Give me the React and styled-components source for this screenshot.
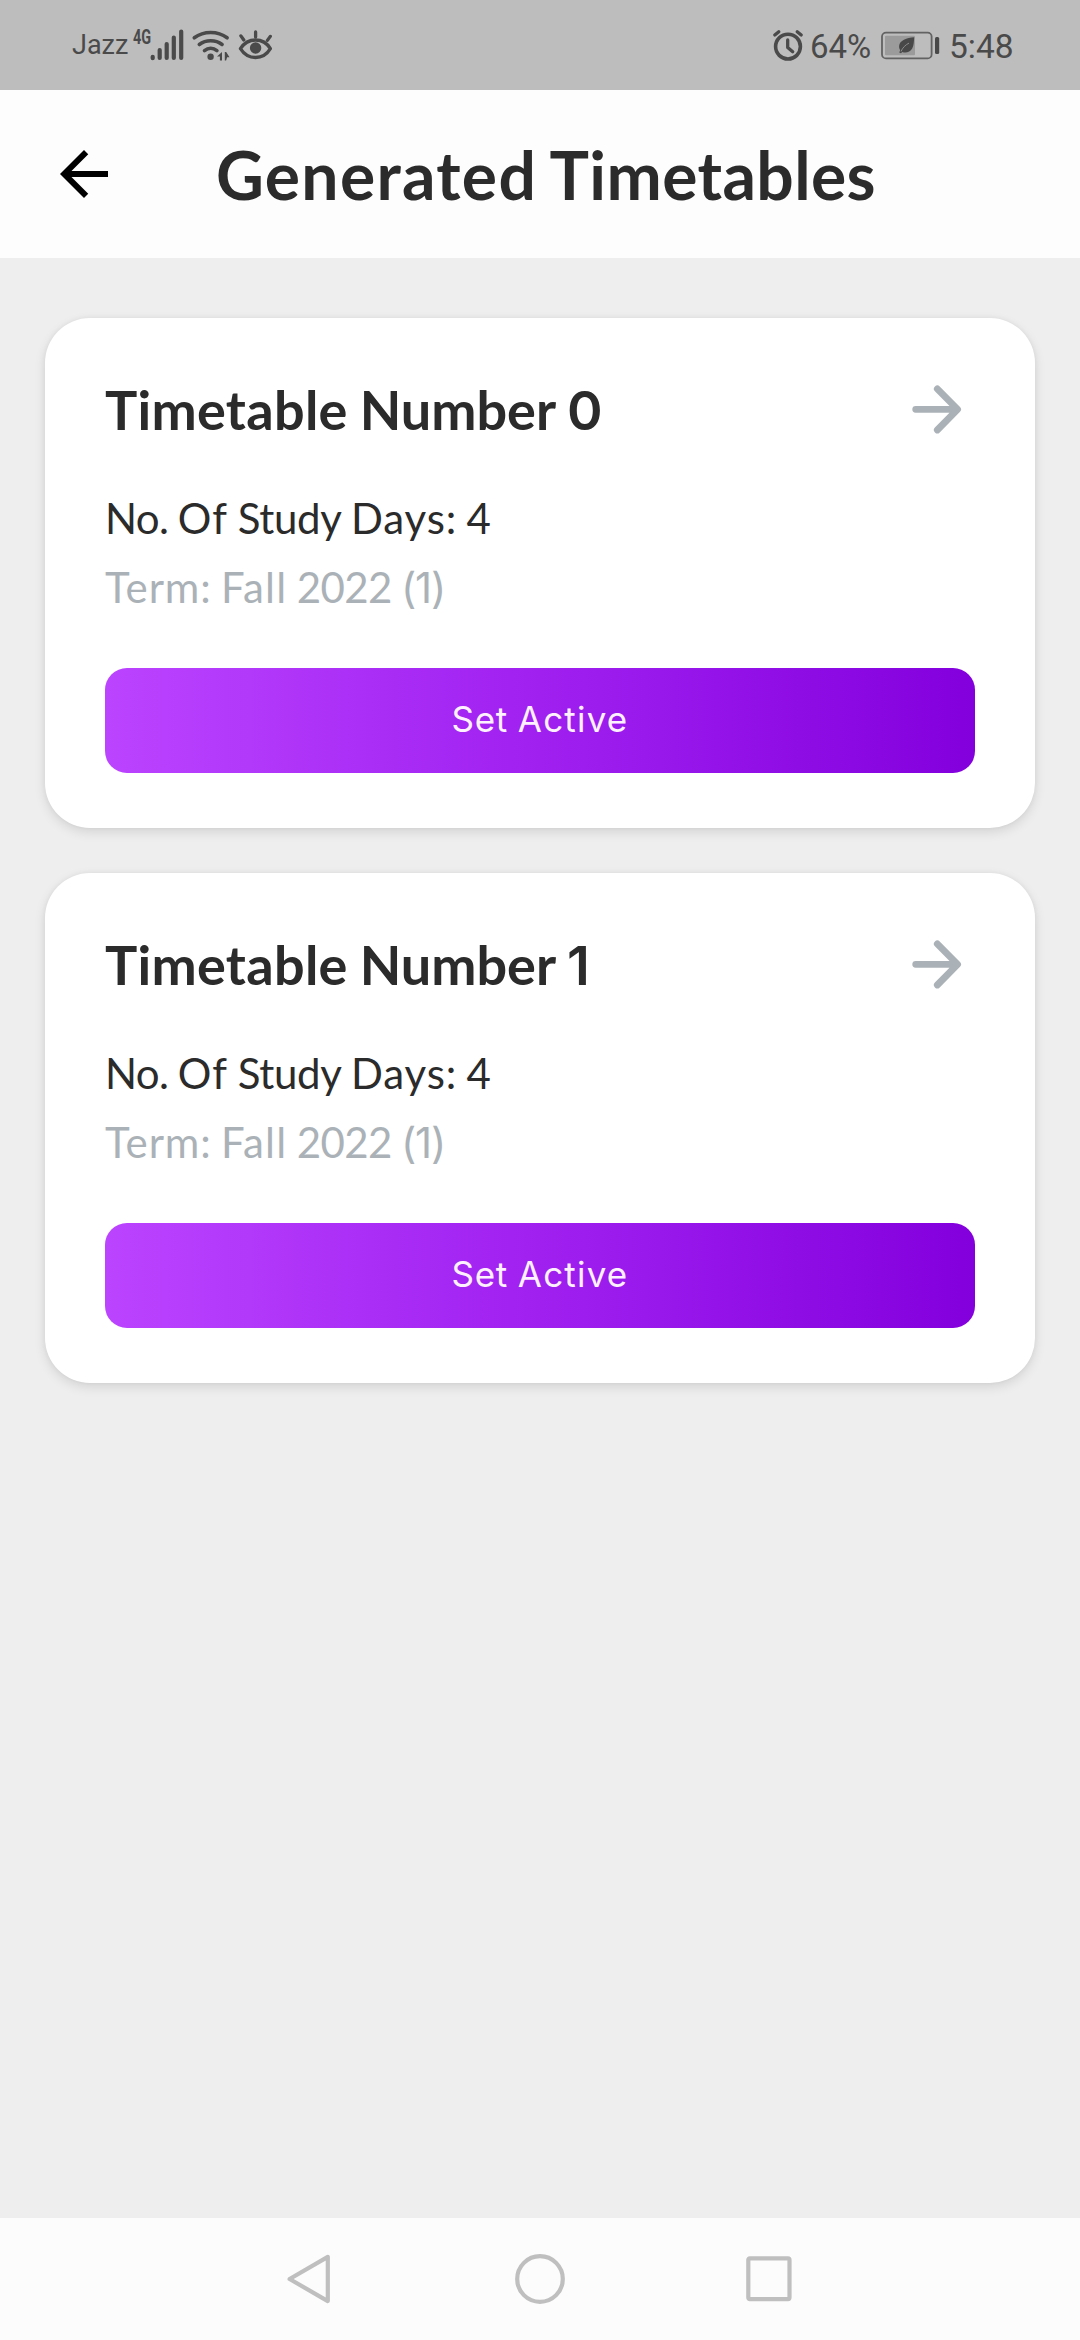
import React from "react";
import styled, { createGlobalStyle } from "styled-components";

const GlobalStyle = createGlobalStyle`
  *, *::before, *::after { box-sizing: border-box; }
  body { margin: 0; background: #eeeeee; }
  svg { display: block; flex: none; }
`;

const Screen = styled.div`
  width: 1080px;
  height: 2340px;
  display: flex;
  flex-direction: column;
  overflow: hidden;
  background: #eeeeee;
  color: #2b2b2b;
  font-family: "Lato", sans-serif;
`;

/* ---------- status bar ---------- */

const StatusBar = styled.div`
  flex: none;
  height: 90px;
  padding: 0 62px 0 72px;
  display: flex;
  align-items: center;
  justify-content: space-between;
  background: #bdbdbd;
  color: #4a4a4a;
  font-family: "Roboto", sans-serif;
`;

const StatusGroup = styled.div`
  display: flex;
  align-items: center;
`;

const StatusText = styled.span`
  width: ${(p) => p.$width}px;
  font-size: ${(p) => p.$size}px;
  line-height: 38px;
  padding-top: ${(p) => p.$drop || 0}px;
  white-space: nowrap;
`;

const NetworkType = styled.span`
  width: 17px;
  height: 34px;
  margin-left: 1px;
  font-size: 19.5px;
  line-height: 20px;
  font-weight: 700;
  white-space: nowrap;
  transform: scaleX(0.74);
  transform-origin: 0 0;
`;

const Gap = styled.span`
  width: ${(p) => p.$w}px;
`;

const SignalIcon = () => (
  <svg width="36" height="34" viewBox="150 28 36 34" fill="none" stroke="currentColor" strokeWidth="4.2" strokeLinecap="round">
    <path d="M152.7 56.8v1.4M159.7 50v8M166.7 44v14M173.8 37.6V58M181.2 31.6V58" />
  </svg>
);

const WifiIcon = () => (
  <svg width="42" height="34" viewBox="190 28 42 34" fill="none" stroke="currentColor" strokeWidth="3.6" strokeLinecap="round">
    <path d="M194.3 37.8c9.4-7 23.400-7 32.800 0M199.300 44.500c6.600-5 16.200-5 22.800 0M204.500 50.600c3.700-2.900 8.700-2.900 12.400 0" />
    <circle cx="210.600" cy="56.800" r="3.200" fill="currentColor" stroke="none" />
    <path d="M222 52v8.500h-2.100v-4H217zM224.800 60.500V52h1.400l3.300 5.200h-2.400l-1 3.300z" fill="currentColor" stroke="none" />
  </svg>
);

const EyeIcon = () => (
  <svg width="38" height="34" viewBox="237 28 38 34" fill="none" stroke="currentColor" strokeWidth="3.3" strokeLinecap="round" strokeLinejoin="round">
    <path d="M240.4 48.6c3.6-5.4 9-8.6 15.1-8.6s11.5 3.2 14.9 8.6c-3.4 5.6-8.8 8.9-14.9 8.9s-11.5-3.3-15.1-8.9z" />
    <circle cx="255.6" cy="48" r="5.7" fill="currentColor" stroke="none" />
    <path d="M255.6 32v5M240.9 35.9l2.9 4.1M270.3 36.4l-2.9 4" />
  </svg>
);

const AlarmIcon = () => (
  <svg width="36" height="34" viewBox="770 28 36 34" fill="none" stroke="currentColor" strokeWidth="3.6" strokeLinecap="round" strokeLinejoin="round">
    <circle cx="788" cy="46.6" r="12.4" />
    <path d="M787.7 40v7.6l5 4.2" strokeWidth="3.3" />
    <path d="M774.8 35l4-3.3M797.2 31.7l4 3.3" strokeWidth="3.3" />
  </svg>
);

const BatteryIcon = () => (
  <svg width="62" height="34" viewBox="879 28 62 34" fill="none">
    <rect x="882" y="32.6" width="49.6" height="25.8" rx="4" stroke="#626262" strokeWidth="1.8" />
    <rect x="885" y="35.8" width="30" height="19.4" rx="1" fill="#9b9b9b" />
    <path d="M914.2 37.3c-7.6.7-14.6 3-15.1 8.7-.1 1.7.3 3.1 1.1 4.2l-1 2.2 1.8.9 1.3-1.3c3.6 1.3 7.8.2 9.9-3.6 1.7-3.1 1.7-7 2-11.1z" fill="#484848" />
    <path d="M901 51.5c1.5-3.7 4.3-6.5 8-8.4" stroke="#8c8c8c" strokeWidth="1" />
    <rect x="935" y="37" width="4.2" height="17" rx="1.5" fill="#484848" />
  </svg>
);

/* ---------- app header ---------- */

const Header = styled.header`
  flex: none;
  height: 168px;
  padding-left: 48px;
  display: flex;
  align-items: center;
  gap: 96px;
  background: #fdfdfd;
`;

const Title = styled.h1`
  margin: 0;
  padding-top: 2px;
  font-size: 66px;
  line-height: 80px;
  font-weight: 700;
  word-spacing: -3.6px;
  white-space: nowrap;
`;

const Word = styled.span`
  letter-spacing: ${(p) => p.$track || 0}px;
`;

/* Plain figures without a foot serif on the 1 */
const Figure = styled(Word)`
  font-family: "Inter", sans-serif;
  font-weight: ${(p) => p.$weight || 400};
  line-height: 1;
`;

const BackIcon = () => (
  <svg width="72" height="72" viewBox="0 0 24 24" fill="#000">
    <path d="M20 11H7.83l5.59-5.59L12 4l-8 8 8 8 1.41-1.41L7.83 13H20v-2z" />
  </svg>
);

/* ---------- timetable cards ---------- */

const List = styled.main`
  flex: 1;
  padding: 60px 45px 0;
  display: flex;
  flex-direction: column;
  gap: 45px;
`;

const Card = styled.article`
  height: 510px;
  padding: 60px 60px 0;
  border-radius: 45px;
  background: #fff;
  box-shadow: 0 4px 12px rgba(0, 0, 0, 0.11), 0 0 5px rgba(0, 0, 0, 0.05);
`;

const CardHead = styled.div`
  height: 61px;
  padding-right: 11px;
  margin-bottom: 45px;
  display: flex;
  align-items: center;
  justify-content: space-between;
`;

const CardTitle = styled.h2`
  margin: 0;
  padding-top: 2px;
  font-size: 54px;
  line-height: 61px;
  font-weight: 700;
  word-spacing: -1.2px;
  white-space: nowrap;
`;

const Detail = styled.p`
  margin: 0;
  font-size: 42px;
  line-height: 69px;
  word-spacing: -1.4px;
  white-space: nowrap;
  color: ${(p) => (p.$muted ? "#abb2b7" : "#2b2b2b")};
`;

const ActiveButton = styled.button`
  display: block;
  width: 870px;
  height: 105px;
  margin: 45.5px 0 0;
  padding: 0 0 2px;
  border: 0;
  border-radius: 22px;
  background: linear-gradient(90deg, #bb44ff 0%, #a020f0 50%, #8300dd 100%);
  color: #fdf0ff;
  font-family: "Inter", sans-serif;
  font-size: 35px;
`;

const ForwardIcon = () => (
  <svg width="54" height="54" viewBox="910 382 54 54" fill="none" stroke="#abb2b7" strokeWidth="6.8" strokeLinecap="round" strokeLinejoin="round">
    <path d="M915.7 409.3H957.4M937.3 388.8l20.3 20.5-20.3 20.7" />
  </svg>
);

const timetables = [
  { number: 0, days: 4 },
  { number: 1, days: 4 },
];

function TimetableCard({ number, days }) {
  return (
    <Card>
      <CardHead>
        <CardTitle>
          <Word $track={0.3}>Timetable</Word> <Word>Number</Word> <Figure $weight={600}>{number}</Figure>
        </CardTitle>
        <ForwardIcon />
      </CardHead>
      <Detail>
        <Word $track={-0.6}>No.</Word> <Word $track={1.2}>Of</Word> <Word $track={-0.3}>Study</Word>{" "}
        <Word $track={0.9}>Days:</Word> <Word>{days}</Word>
      </Detail>
      <Detail $muted>
        <Word $track={0.9}>Term:</Word> <Word $track={1.2}>Fall</Word> <Word $track={-0.6}>2022</Word>{" "}
        <Figure $track={-1.3}>(1)</Figure>
      </Detail>
      <ActiveButton>
        <Word $track={0.7}>Set</Word> <Word $track={1.2}>Active</Word>
      </ActiveButton>
    </Card>
  );
}

/* ---------- system navigation ---------- */

const NavBar = styled.nav`
  flex: none;
  height: 122px;
  padding: 0 195px;
  display: grid;
  grid-template-columns: repeat(3, 1fr);
  align-items: center;
  justify-items: center;
  background: #fcfcfc;
`;

const NavIcon = ({ children }) => (
  <svg width="50" height="50" viewBox="0 0 50 50" fill="none" stroke="#bfbfbf" strokeWidth="4.2" strokeLinejoin="round">
    {children}
  </svg>
);

export default function App() {
  return (
    <Screen>
      <GlobalStyle />
      <StatusBar>
        <StatusGroup>
          <StatusText $width={60} $size={27}>Jazz</StatusText>
          <NetworkType>4G</NetworkType>
          <SignalIcon />
          <Gap $w={4} />
          <WifiIcon />
          <Gap $w={5} />
          <EyeIcon />
        </StatusGroup>
        <StatusGroup>
          <AlarmIcon />
          <Gap $w={4} />
          <StatusText $width={65} $size={33} $drop={3}>64%</StatusText>
          <Gap $w={4} />
          <BatteryIcon />
          <Gap $w={8} />
          <StatusText $width={69} $size={33.5} $drop={3}>5:48</StatusText>
        </StatusGroup>
      </StatusBar>
      <Header>
        <BackIcon />
        <Title>
          <Word $track={1.3}>Generated</Word> <Word $track={0.4}>Timetables</Word>
        </Title>
      </Header>
      <List>
        {timetables.map((t) => (
          <TimetableCard key={t.number} {...t} />
        ))}
      </List>
      <NavBar>
        <NavIcon><path d="M42.8 2.9V47.1L4.6 25z" /></NavIcon>
        <NavIcon><circle cx="25" cy="25" r="22.8" /></NavIcon>
        <NavIcon><rect x="3.3" y="4.3" width="41.2" height="40.8" rx="1.5" /></NavIcon>
      </NavBar>
    </Screen>
  );
}
